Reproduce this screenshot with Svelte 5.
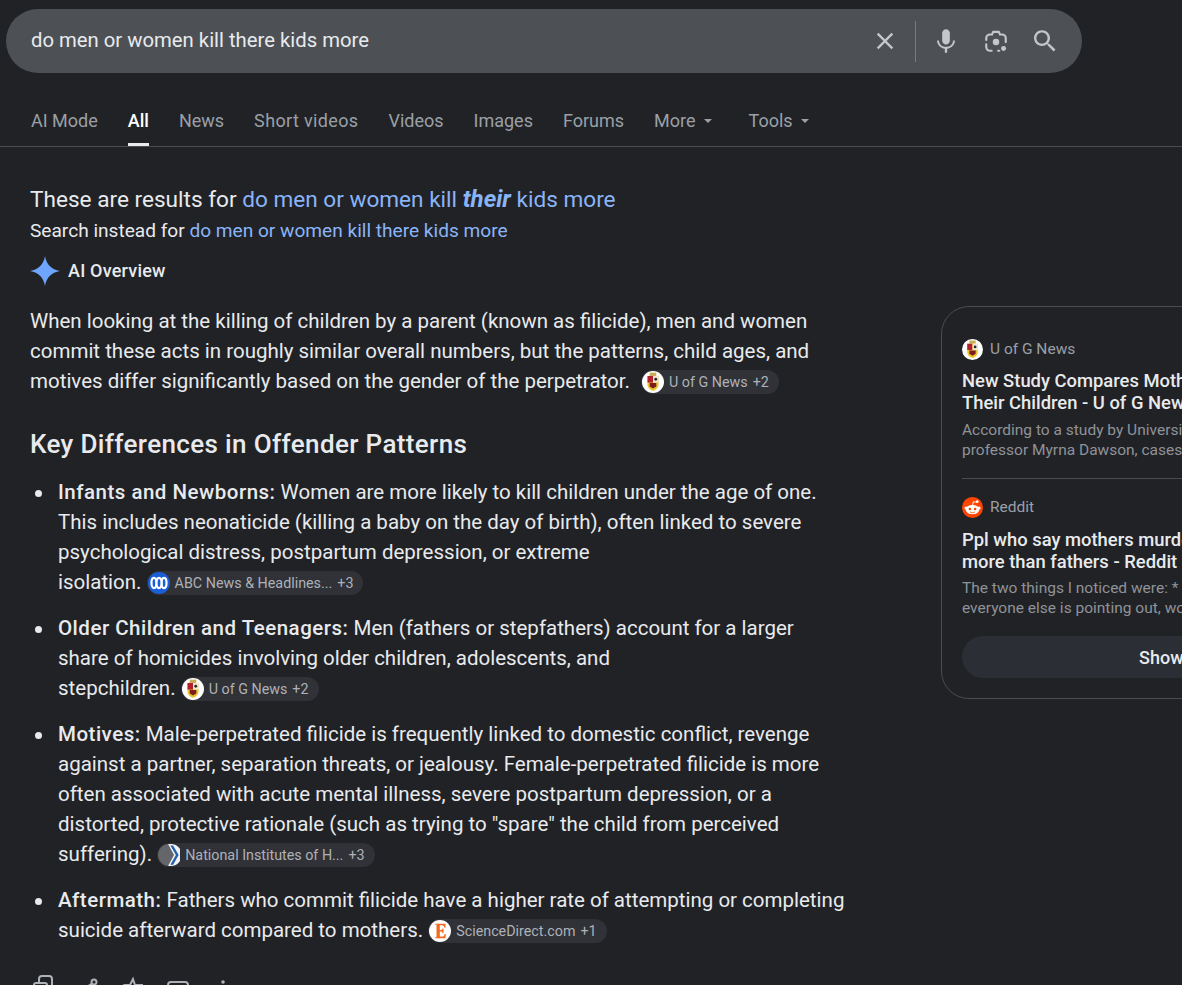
<script lang="ts">
  const tabs = [
    { label: 'AI Mode' },
    { label: 'All', active: true },
    { label: 'News' },
    { label: 'Short videos', wide: true },
    { label: 'Videos' },
    { label: 'Images' },
    { label: 'Forums' },
    { label: 'More', menu: true },
    { label: 'Tools', menu: true, tools: true }
  ];
</script>

{#snippet guelph()}
  <svg class="fav" viewBox="0 0 20 20">
    <circle cx="10" cy="10" r="10" fill="#fff" />
    <path d="M7 1.500h6v3H7z" fill="#c8ad55" />
    <path d="M5 4.500h10v8c0 2.800-2.300 4.700-5 5.500-2.700-.8-5-2.700-5-5.500z" fill="#e9c62e" />
    <path d="M5 4.500h5v6H5z" fill="#b3202a" />
    <path d="M10 4.500h5v6h-5z" fill="#efe9d8" />
    <circle cx="12.500" cy="7.500" r="1.300" fill="#2a2a2a" />
    <path d="M7 11h6v3l-3 2-3-2z" fill="#7d1d20" />
  </svg>
{/snippet}

{#snippet chip(kind: string, label: string, more: string)}
  <span class="chip">
    {#if kind === 'guelph'}
      {@render guelph()}
    {:else if kind === 'abc'}
      <svg class="fav" viewBox="0 0 24 24">
        <circle cx="12" cy="12" r="12" fill="#1a5fd6" />
        <g fill="#1a5fd6" stroke="#fff" stroke-width="2.400">
          <ellipse cx="6.500" cy="12" rx="2.700" ry="5.500" />
          <ellipse cx="17.500" cy="12" rx="2.700" ry="5.500" />
          <ellipse cx="12" cy="12" rx="2.700" ry="5.500" />
        </g>
      </svg>
    {:else if kind === 'nih'}
      <svg class="fav" viewBox="0 0 24 24">
        <circle cx="12" cy="12" r="12" fill="#65666a" />
        <path d="M11 0h3a12 12 0 0 1 0 24h-3l6.500-12z" fill="#f2f2f2" />
        <path d="M13.500 1.500h3l6 10.500-6 10.500h-3l6-10.500z" fill="#1f62b0" />
      </svg>
    {:else}
      <svg class="fav" viewBox="0 0 24 24">
        <circle cx="12" cy="12" r="12" fill="#fff" />
        <path d="M6.500 4h11.500v4.500h-1.200c-.2-1.800-1.100-2.800-2.700-2.800h-2.300v5.300h1.200c1 0 1.600-.6 1.700-1.800h1.100v5.300h-1.100c-.1-1.300-.7-1.900-1.700-1.900h-1.200v5.500h2.500c1.500 0 2.500-1 2.800-2.800h1.200l-.3 4.700H6.500v-1l1.700-.3V5.300L6.500 5z" fill="#f26c1d" />
      </svg>
    {/if}
    <span class="chip-label">{label}</span>
    <span class="chip-more">{more}</span>
  </span>
{/snippet}

<div class="page">
  <header class="searchbar">
    <span class="query">do men or women kill there kids more</span>
    <div class="search-actions">
      <svg class="ic-clear" viewBox="0 0 24 24" fill="currentColor">
        <path d="M19 6.410 17.590 5 12 10.590 6.410 5 5 6.410 10.590 12 5 17.590 6.410 19 12 13.410 17.590 19 19 17.590 13.410 12z" />
      </svg>
      <span class="sep"></span>
      <svg class="ic-mic" viewBox="0 0 24 24" fill="currentColor">
        <path d="M12 15c1.900 0 3.300-1.500 3.300-3.400V5.400C15.300 3.500 13.900 2 12 2S8.700 3.500 8.700 5.400v6.200C8.700 13.500 10.100 15 12 15z" />
        <path d="M18 11.500c0 3.300-2.700 5.500-6 5.500s-6-2.200-6-5.500H4.300c0 3.700 3 6.600 6.700 7.100V22h2v-3.400c3.700-.5 6.700-3.400 6.700-7.100z" />
      </svg>
      <svg class="ic-lens" viewBox="0 0 24 24">
        <g fill="none" stroke="currentColor" stroke-width="2" stroke-linecap="round">
          <path d="M8 21H6.500A3.500 3.500 0 0 1 3 17.500V15" />
          <path d="M15 21h-1" />
          <path d="M21 13V9.500A3.500 3.500 0 0 0 17.500 6h-1.800L14.500 3.500h-5L8.300 6H6.500A3.500 3.500 0 0 0 3 9.500V11" />
        </g>
        <circle cx="12" cy="13" r="3" fill="currentColor" />
        <circle cx="19" cy="19" r="2.300" fill="currentColor" />
      </svg>
      <svg class="ic-search" viewBox="0 0 24 24" fill="currentColor">
        <path d="M15.700 14.300h-.8l-.3-.3c1.100-1.200 1.700-2.800 1.700-4.500C16.300 5.700 13.200 2.700 9.400 2.700S2.600 5.700 2.600 9.500s3 6.800 6.800 6.800c1.700 0 3.300-.6 4.500-1.700l.3.3v.8l5.200 5.200 1.600-1.600zm-6.300 0c-2.700 0-4.800-2.100-4.800-4.800s2.100-4.800 4.800-4.800 4.800 2.100 4.800 4.800-2.100 4.800-4.800 4.800z" />
      </svg>
    </div>
  </header>

  <nav class="tabs">
    {#each tabs as tab}
      <span class="tab" class:active={tab.active} class:tools={tab.tools} class:wide={tab.wide}>
        {tab.label}
        {#if tab.menu}<i class="caret"></i>{/if}
      </span>
    {/each}
  </nav>

  <div class="content">
    <main class="results">
      <p class="correction">
        These are results for
        <a href="#q">do men or women kill <b>their</b> kids more</a>
      </p>
      <p class="instead">
        Search instead for <a href="#q">do men or women kill there kids more</a>
      </p>

      <div class="ai-label">
        <svg class="spark" viewBox="0 0 30 30">
          <path d="M15 0c1.300 8.200 6.300 13.500 15 15-8.700 1.500-13.700 6.800-15 15-1.300-8.200-6.300-13.500-15-15C8.700 13.500 13.700 8.200 15 0z" fill="#6ea6ff" />
        </svg>
        <span>AI Overview</span>
      </div>

      <p class="lead">
        When looking at the killing of children by a parent (known as filicide), men and women<br />
        commit these acts in roughly similar overall numbers, but the patterns, child ages, and<br />
        motives differ significantly based on the gender of the perpetrator.
        {@render chip('guelph', 'U of G News', '+2')}
      </p>

      <h2>Key Differences in Offender Patterns</h2>

      <ul>
        <li>
          <b>Infants and Newborns:</b> Women are more likely to kill children under the age of one.<br />
          This includes neonaticide (killing a baby on the day of birth), often linked to severe<br />
          psychological distress, postpartum depression, or extreme<br />
          isolation.
          {@render chip('abc', 'ABC News & Headlines...', '+3')}
        </li>
        <li>
          <b>Older Children and Teenagers:</b> Men (fathers or stepfathers) account for a larger<br />
          share of homicides involving older children, adolescents, and<br />
          stepchildren.
          {@render chip('guelph', 'U of G News', '+2')}
        </li>
        <li>
          <b>Motives:</b> Male-perpetrated filicide is frequently linked to domestic conflict, revenge<br />
          against a partner, separation threats, or jealousy. Female-perpetrated filicide is more<br />
          often associated with acute mental illness, severe postpartum depression, or a<br />
          distorted, protective rationale (such as trying to "spare" the child from perceived<br />
          suffering).
          {@render chip('nih', 'National Institutes of H...', '+3')}
        </li>
        <li>
          <b>Aftermath:</b> Fathers who commit filicide have a higher rate of attempting or completing<br />
          suicide afterward compared to mothers.
          {@render chip('sd', 'ScienceDirect.com', '+1')}
        </li>
      </ul>

      <div class="feedback">
        <svg viewBox="0 0 24 24"><path d="M8 7V4a3 3 0 0 1 3-3h7a3 3 0 0 1 3 3v12M5 8h9a2 2 0 0 1 2 2v11a2 2 0 0 1-2 2H5a2 2 0 0 1-2-2V10a2 2 0 0 1 2-2z" /></svg>
        <svg viewBox="0 0 24 24"><circle cx="18" cy="7" r="2.500" /><circle cx="6" cy="15" r="2.500" /><path d="m8 14 8-5.500M8 16l8 5" /></svg>
        <svg viewBox="0 0 24 24"><path d="M12 4 9 10H4a2 2 0 0 0-2 2v10h16l3-9v-3h-7z" /></svg>
        <svg viewBox="0 0 24 24"><rect x="2" y="7" width="20" height="16" rx="3" /></svg>
        <svg viewBox="0 0 24 24"><circle cx="12" cy="7" r="1.800" fill="currentColor" stroke="none" /></svg>
      </div>
    </main>

    <aside class="sources">
      <article class="source">
        <div class="site">
          {@render guelph()}
          <span>U of G News</span>
        </div>
        <h3>New Study Compares Mothers and Fathers Who Kill<br />Their Children - U of G News</h3>
        <p>According to a study by University of Guelph sociology<br />professor Myrna Dawson, cases involving mothers are</p>
      </article>
      <article class="source">
        <div class="site">
          <svg class="fav" viewBox="0 0 20 20">
            <circle cx="10" cy="10" r="10" fill="#ff4500" />
            <ellipse cx="10" cy="12" rx="6.500" ry="4.500" fill="#fff" />
            <circle cx="3.800" cy="10.500" r="1.500" fill="#fff" />
            <circle cx="16.200" cy="10.500" r="1.500" fill="#fff" />
            <circle cx="14.500" cy="4.500" r="1.300" fill="#fff" />
            <path d="M10 8l.8-3.500 3 .5" fill="none" stroke="#fff" stroke-width=".8" />
            <circle cx="7.500" cy="11.500" r="1.200" fill="#ff4500" />
            <circle cx="12.500" cy="11.500" r="1.200" fill="#ff4500" />
            <path d="M7.500 14.200c1.500 1 3.500 1 5 0" fill="none" stroke="#ff4500" stroke-width=".7" />
          </svg>
          <span>Reddit</span>
        </div>
        <h3>Ppl who say mothers murder their children<br />more than fathers - Reddit</h3>
        <p>The two things I noticed were: * It's true that, as<br />everyone else is pointing out, women are more likely</p>
      </article>
      <button class="show-all">Show all</button>
    </aside>
  </div>
</div>

<style>
  :global(body) {
    margin: 0;
    background: #212226;
    overflow: hidden;
  }

  .page {
    width: 1182px;
    height: 985px;
    overflow: hidden;
    background: #212226;
    color: #e8eaed;
    font-family: Roboto, "Liberation Sans", sans-serif;
  }

  .searchbar {
    display: flex;
    align-items: center;
    justify-content: space-between;
    box-sizing: border-box;
    width: 1076px;
    height: 64px;
    margin: 9px 0 0 6px;
    padding: 0 23px 0 25px;
    border-radius: 32px;
    background: #4d5156;
  }

  .query {
    margin-bottom: 2px;
    font-size: 20.3px;
    color: #e8eaed;
  }

  .search-actions {
    display: flex;
    align-items: center;
    color: #c4c7c9;
  }

  .search-actions svg {
    display: block;
  }

  .ic-clear {
    width: 28px;
    height: 28px;
  }

  .sep {
    width: 1px;
    height: 41px;
    margin: 0 16px 0 16px;
    background: #777a7f;
  }

  .ic-mic {
    width: 28px;
    height: 28px;
  }

  .ic-lens {
    width: 26px;
    height: 26px;
    margin-left: 23px;
  }

  .ic-search {
    width: 28px;
    height: 28px;
    margin-left: 22px;
  }

  .tabs {
    display: flex;
    box-sizing: border-box;
    height: 74px;
    padding: 25px 0 0 31px;
    gap: 30px;
    border-bottom: 1px solid #4a4c50;
  }

  .tab {
    display: flex;
    align-items: flex-start;
    gap: 8px;
    box-sizing: border-box;
    height: 48px;
    padding-top: 13px;
    font-size: 18px;
    line-height: 20px;
    color: #9aa0a6;
  }

  .tab.wide {
    letter-spacing: .35px;
  }

  .tab.active {
    color: #fff;
    font-weight: 500;
    border-bottom: 3px solid #e8eaed;
  }

  .tab.tools {
    margin-left: 7px;
  }

  .caret {
    width: 0;
    height: 0;
    margin-top: 8px;
    border-left: 4px solid transparent;
    border-right: 4px solid transparent;
    border-top: 4px solid #9aa0a6;
  }

  .content {
    display: flex;
  }

  .results {
    flex: none;
    box-sizing: border-box;
    width: 941px;
    padding: 38px 0 0 30px;
  }

  .correction {
    margin: 0;
    font-size: 22.600px;
    line-height: 30px;
    color: #e8eaed;
  }

  .correction b {
    font-size: 24px;
    line-height: 20px;
    font-style: italic;
    font-weight: 700;
  }

  a {
    color: #8ab4f8;
    text-decoration: none;
  }

  .instead {
    margin: 1px 0 0;
    font-size: 19.100px;
    line-height: 30px;
    color: #e8eaed;
  }

  .ai-label {
    display: flex;
    align-items: center;
    gap: 8px;
    margin-top: 9px;
    height: 30px;
    font-size: 18px;
    font-weight: 500;
    letter-spacing: .2px;
    color: #e8eaed;
  }

  .spark {
    width: 30px;
    height: 30px;
    margin-top: 2px;
  }

  .lead {
    margin: 21px 0 0;
    font-size: 20.500px;
    line-height: 30px;
    color: #e8eaed;
  }

  .lead .chip {
    margin-left: 6px;
  }

  h2 {
    margin: 32px 0 0;
    font-size: 26px;
    line-height: 32px;
    font-weight: 500;
    letter-spacing: .36px;
    color: #e8eaed;
  }

  ul {
    list-style: none;
    margin: 17px 0 0;
    padding: 0;
  }

  li {
    position: relative;
    padding-left: 28px;
    margin-bottom: 16px;
    font-size: 20.500px;
    line-height: 30px;
    color: #e8eaed;
  }

  li::before {
    content: '';
    position: absolute;
    left: 5px;
    top: 13px;
    width: 7px;
    height: 7px;
    border-radius: 50%;
    background: #e8eaed;
  }

  li b {
    font-weight: 500;
    letter-spacing: .5px;
  }

  .chip {
    display: inline-flex;
    align-items: center;
    gap: 5px;
    height: 24px;
    margin-top: 4px;
    padding-right: 10px;
    border-radius: 12px;
    background: #303238;
    font-size: 14.300px;
    line-height: 24px;
    color: #aeb1b7;
    vertical-align: top;
    white-space: nowrap;
  }

  .chip .fav {
    width: 22px;
    height: 22px;
    margin-left: 1px;
  }

  .feedback {
    display: flex;
    gap: 21px;
    margin-top: 30px;
    padding-left: 1px;
    color: #aeb1b7;
  }

  .feedback svg {
    flex: none;
    width: 24px;
    height: 24px;
    fill: none;
    stroke: currentColor;
    stroke-width: 2;
  }

  .sources {
    flex: none;
    box-sizing: border-box;
    width: 464px;
    height: 393px;
    margin-top: 159px;
    padding: 31px 20px 20px;
    border: 1px solid #4a4c50;
    border-radius: 28px;
  }

  .source + .source {
    margin-top: 18px;
    padding-top: 17px;
    border-top: 1px solid #4a4c50;
  }

  .source + .source h3 {
    margin-top: 11px;
  }

  .source + .source p {
    margin-top: 5px;
  }

  .site {
    display: flex;
    align-items: center;
    gap: 7px;
    font-size: 15.500px;
    line-height: 22px;
    color: #9aa0a6;
  }

  .fav {
    flex: none;
    display: block;
  }

  .site .fav {
    width: 21px;
    height: 21px;
  }

  h3 {
    margin: 10px 0 0;
    font-size: 18.400px;
    line-height: 22px;
    font-weight: 500;
    color: #e8eaed;
    white-space: nowrap;
  }

  .source p {
    margin: 6px 0 0;
    font-size: 15.500px;
    line-height: 20px;
    color: #8f9398;
    white-space: nowrap;
  }

  .show-all {
    display: block;
    width: 100%;
    height: 42px;
    margin-top: 18px;
    border: 0;
    border-radius: 21px;
    background: #2b2e35;
    font: 500 18px Roboto, sans-serif;
    color: #e8eaed;
  }
</style>
